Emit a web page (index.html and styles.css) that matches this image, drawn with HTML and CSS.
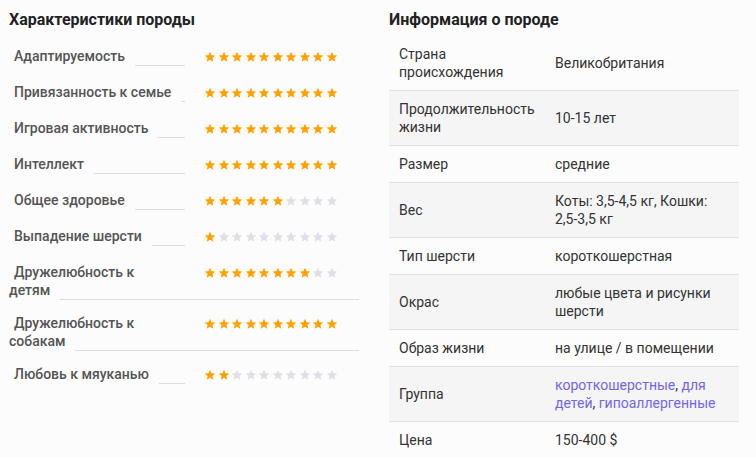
FILE: index.html
```html
<!DOCTYPE html>
<html lang="ru">
<head>
<meta charset="utf-8">
<title>Порода</title>
<link rel="stylesheet" href="styles.css">
</head>
<body>
<svg width="0" height="0" class="defs" aria-hidden="true">
  <defs>
    <path id="star" d="M12 1.6l3.1 6.9 7.4.7-5.6 5 1.7 7.3L12 17.7l-6.6 3.8 1.7-7.3-5.6-5 7.4-.7z"/>
  </defs>
</svg>
<div class="page">
  <section class="panel">
    <h2 class="title">Характеристики породы</h2>
    <ul class="traits">
      <li class="trait" data-n="10"><span class="stars"></span><div class="name"><span class="txt">Адаптируемость</span></div></li>
      <li class="trait" data-n="10"><span class="stars"></span><div class="name"><span class="txt">Привязанность к семье</span></div></li>
      <li class="trait" data-n="10"><span class="stars"></span><div class="name"><span class="txt">Игровая активность</span></div></li>
      <li class="trait" data-n="10"><span class="stars"></span><div class="name"><span class="txt">Интеллект</span></div></li>
      <li class="trait" data-n="6"><span class="stars"></span><div class="name"><span class="txt">Общее здоровье</span></div></li>
      <li class="trait" data-n="1"><span class="stars"></span><div class="name"><span class="txt">Выпадение шерсти</span></div></li>
      <li class="trait" data-n="8"><span class="stars"></span><div class="name"><span class="txt">Дружелюбность к детям</span></div></li>
      <li class="trait" data-n="10"><span class="stars"></span><div class="name"><span class="txt">Дружелюбность к собакам</span></div></li>
      <li class="trait" data-n="2"><span class="stars"></span><div class="name"><span class="txt">Любовь к мяуканью</span></div></li>
    </ul>
  </section>
  <section class="panel">
    <h2 class="title">Информация о породе</h2>
    <table class="info">
      <tr><td>Страна происхождения</td><td>Великобритания</td></tr>
      <tr><td>Продолжительность жизни</td><td>10-15 лет</td></tr>
      <tr><td>Размер</td><td>средние</td></tr>
      <tr><td>Вес</td><td>Коты: 3,5-4,5 кг, Кошки: 2,5-3,5 кг</td></tr>
      <tr><td>Тип шерсти</td><td>короткошерстная</td></tr>
      <tr><td>Окрас</td><td>любые цвета и рисунки шерсти</td></tr>
      <tr><td>Образ жизни</td><td>на улице / в помещении</td></tr>
      <tr><td>Группа</td><td><a href="#">короткошерстные</a>, <a href="#">для детей</a>, <a href="#">гипоаллергенные</a></td></tr>
      <tr><td>Цена</td><td>150-400 $</td></tr>
    </table>
  </section>
</div>
<script>
  document.querySelectorAll('.trait').forEach(function (li) {
    var n = +li.dataset.n, box = li.querySelector('.stars'), html = '';
    for (var i = 0; i < 10; i++) {
      html += '<svg class="star' + (i < n ? ' on' : '') + '" viewBox="0 0 24 24"><use href="#star"/></svg>';
    }
    box.innerHTML = html;
  });
</script>
</body>
</html>
```
FILE: styles.css
```css
html, body {
  margin: 0;
  padding: 0;
  background: #fcfcfc;
}
body {
  font-family: Roboto, "Noto Sans", "Liberation Sans", sans-serif;
  font-size: 14px;
  line-height: 18px;
  color: #333;
}
.defs {
  position: absolute;
  width: 0;
  height: 0;
}
.page {
  display: grid;
  grid-template-columns: 1fr 1fr;
  column-gap: 30px;
  padding: 0 17px 0 9px;
}
.title {
  margin: 10px 0 0;
  font-size: 16px;
  line-height: 20px;
  font-weight: 700;
  color: #222;
}
.traits {
  list-style: none;
  margin: 17px 0 0;
  padding: 0;
}
.trait {
  display: flow-root;
  margin-bottom: 15px;
}
.stars {
  float: right;
  box-sizing: border-box;
  width: 174px;
  height: 21px;
  padding: 4px 0 0 19px;
  background: #fcfcfc;
  display: flex;
  align-items: flex-start;
  gap: 1.5px;
}
.star {
  width: 12px;
  height: 12px;
  fill: #dfe0e5;
  flex: none;
}
.star.on {
  fill: #ffa200;
}
.name {
  border-bottom: 1px solid #dcdce2;
  margin-bottom: -1px;
  font-weight: 500;
  color: #555;
}
.txt {
  background: #fcfcfc;
  padding: 0 10px 3px 5px;
}
.info {
  margin-top: 6px;
  width: 100%;
  border-collapse: collapse;
}
.info td {
  padding: 9px 10px;
  vertical-align: middle;
  border-bottom: 1px solid #e0e0e8;
  color: #333;
}
.info td:first-child {
  width: 136px;
}
.info tr:nth-child(even) td {
  background: #f5f5f5;
}
.info tr:last-child td {
  border-bottom: 0;
}
.info a {
  color: #7266e6;
  text-decoration: none;
}
```
